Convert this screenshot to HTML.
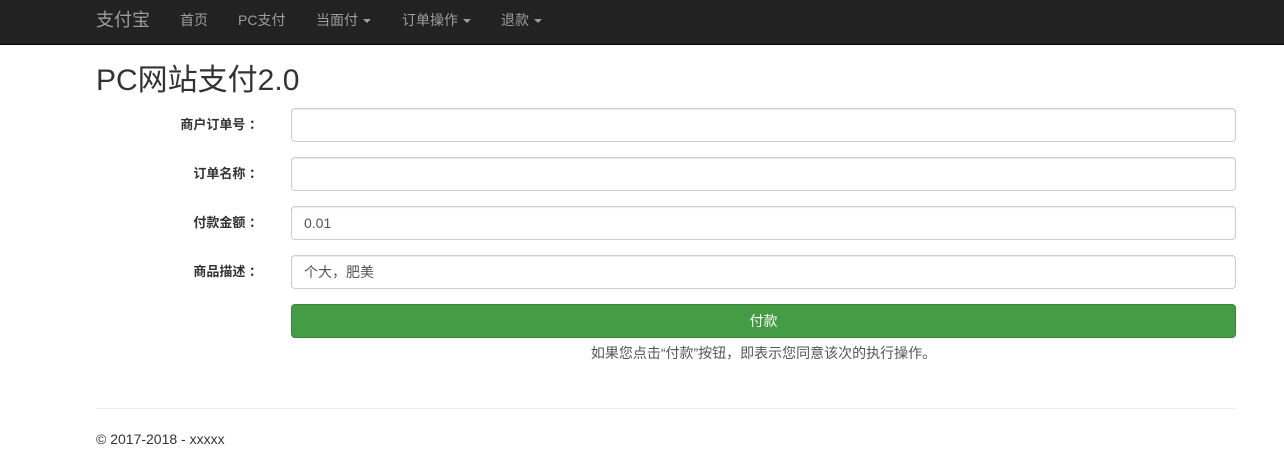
<!DOCTYPE html>
<html><head><meta charset="utf-8"><style>
body{margin:0;width:1284px;height:456px;background:#fff;font-family:"Liberation Sans","Noto Sans CJK SC",sans-serif;font-size:14px;color:#333;position:relative;overflow:hidden}
.nav{position:absolute;left:0;top:0;width:1284px;height:44px;background:#222;border-bottom:1px solid #080808}
.nav span{position:absolute;top:0;line-height:40px;color:#9d9d9d;font-size:14px}
.caret{display:inline-block;width:0;height:0;border-top:4px solid #9d9d9d;border-left:4px solid transparent;border-right:4px solid transparent;vertical-align:middle;margin-left:5px}
.a{position:absolute}
h1{position:absolute;left:96px;top:62px;margin:0;font-size:30px;font-weight:normal;line-height:38px;color:#333}
.lbl{position:absolute;right:1022px;font-weight:bold;line-height:34px;color:#333;font-size:13px}
.in{position:absolute;left:291px;height:32px;border:1px solid #ccc;border-radius:4px;box-shadow:inset 0 1px 1px rgba(0,0,0,.075);line-height:32px;padding-left:12px;width:931px;color:#555}
.btn{position:absolute;left:291px;top:304px;width:943px;height:32px;background:#449d44;border:1px solid #398439;border-radius:4px;color:#fff;text-align:center;line-height:32px}
</style></head><body>
<div class="nav">
<span style="left:96px;font-size:18px;line-height:40px">支付宝</span>
<span style="left:180px">首页</span>
<span style="left:238px">PC支付</span>
<span style="left:316px">当面付<i class="caret"></i></span>
<span style="left:402px">订单操作<i class="caret"></i></span>
<span style="left:501px">退款<i class="caret"></i></span>
</div>
<h1>PC网站支付2.0</h1>
<div class="lbl" style="top:108px">商户订单号 ：</div>
<div class="in" style="top:108px"></div>
<div class="lbl" style="top:157px">订单名称 ：</div>
<div class="in" style="top:157px"></div>
<div class="lbl" style="top:206px">付款金额 ：</div>
<div class="in" style="top:206px">0.01</div>
<div class="lbl" style="top:255px">商品描述 ：</div>
<div class="in" style="top:255px">个大，肥美</div>
<div class="btn">付款</div>
<div class="a" style="left:291px;width:945px;top:344px;text-align:center;color:#555;line-height:18px">如果您点击“付款”按钮，即表示您同意该次的执行操作。</div>
<div class="a" style="left:96px;top:408px;width:1140px;border-top:1px solid #eee"></div>
<div class="a" style="left:96px;top:430px;line-height:18px">© 2017-2018 - xxxxx</div>
</body></html>
